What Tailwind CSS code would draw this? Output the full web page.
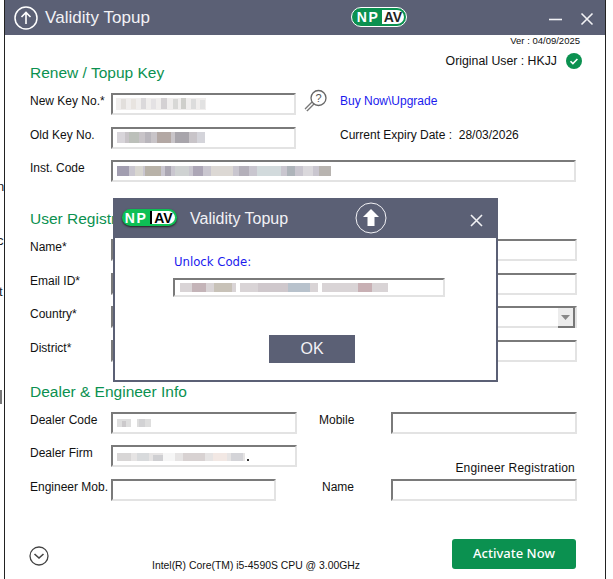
<!DOCTYPE html>
<html>
<head>
<meta charset="utf-8">
<script src="https://cdn.jsdelivr.net/npm/@tailwindcss/browser@4"></script>
<title>Validity Topup</title>
</head>
<body class="bg-white font-['Liberation_Sans',Arial,sans-serif] text-[#111]">
<div class="relative w-[613px] h-[579px] overflow-hidden bg-white">

  <!-- scraps of the window behind -->
  <span class="absolute left-[-3px] top-[180px] text-[13px] text-[#222] leading-none">n</span>
  <span class="absolute left-[-3px] top-[234px] text-[13px] text-[#222] leading-none">c</span>
  <span class="absolute left-[-1px] top-[285px] text-[13px] text-[#222] leading-none">t</span>
  <div class="absolute left-0 top-[390px] w-[2px] h-[14px] bg-[#777]"></div>

  <!-- main window -->
  <div class="absolute left-[4px] top-0 w-[602px] h-[579px] border-x border-[#222] bg-white flex flex-col">
    <header class="h-[35px] shrink-0 bg-[#5b6075] flex items-center pl-[9px] text-white relative">
      <svg class="w-[24px] h-[24px]" viewBox="0 0 24 24" fill="none" stroke="white"><circle cx="12" cy="12" r="11" stroke-width="1.5"/><path d="M12 18V6.500M7.500 11l4.500-4.500 4.500 4.500" stroke-width="1.600"/></svg>
      <span class="ml-[7px] text-[17px] tracking-[0.05px] text-[#f2f2f5]">Validity Topup</span>
      <div class="absolute left-[346px] top-[7px] w-[56px] h-[20px] rounded-full bg-[#0b9150] border border-white p-[2px] flex items-center overflow-hidden text-[14px] font-bold leading-none">
        <span class="w-[28px] text-center text-white tracking-[1.5px]">NP</span>
        <span class="flex-1 h-full bg-white text-[#222] flex items-center justify-center rounded-l-[4px] rounded-r-full">AV</span>
      </div>
      <svg class="absolute left-[543px] top-[11px] w-[48px] h-[16px]" viewBox="0 0 48 16" fill="none" stroke="#f2f2f5" stroke-width="1.600"><path d="M1 8.500h13"/><path d="M33.500 2.500l11 11M44.500 2.500l-11 11"/></svg>
    </header>

    <div class="relative flex-1">
      <p class="absolute right-[25px] top-[0px] text-[9.500px] leading-[12px]">Ver : 04/09/2025</p>
      <div class="absolute right-[23px] top-[17px] flex items-center gap-[9px] text-[12.300px]">
        <span>Original User : HKJJ</span>
        <svg class="w-[16px] h-[16px]" viewBox="0 0 16 16"><circle cx="8" cy="8" r="8" fill="#0b9150"/><path d="M4.500 8.200l2.400 2.400 4.500-4.600" stroke="white" stroke-width="1.600" fill="none"/></svg>
      </div>

      <div class="absolute left-[25px] top-0 right-[25px] bottom-0 flex flex-col">
        <h2 class="mt-[29px] h-[18px] text-[15.500px] leading-[18px] text-[#0b9150]">Renew / Topup Key</h2>

        <div class="mt-[11px] h-[22px] flex">
          <label class="w-[81px] text-[12px] leading-[16px]">New Key No.*</label>
          <div class="w-[185px] h-[22px] border-2 border-[#7a7a7a] border-r-[#e3e3e3] border-b-[#e3e3e3] flex items-center pl-[3px]">
            <svg width="92" height="14"><rect x="0" y="1" width="90" height="12" fill="#f0eeed"/><rect x="5" y="2" width="5" height="10" fill="#e2dfdc"/><rect x="15" y="2" width="5" height="10" fill="#e8e4e0"/><rect x="25" y="1" width="5" height="11" fill="#dbd9db"/><rect x="35" y="2" width="5" height="10" fill="#e4e2e4"/><rect x="45" y="1" width="6" height="11" fill="#d4d1d3"/><rect x="57" y="2" width="5" height="10" fill="#d8d8d6"/><rect x="65" y="1" width="5" height="11" fill="#cfcfcb"/><rect x="75" y="2" width="5" height="10" fill="#dcdcdc"/><rect x="84" y="3" width="5" height="9" fill="#e2e2e2"/></svg>
          </div>
          <svg class="ml-[8px] -mt-[4px] w-[23px] h-[24px]" viewBox="0 0 23 24" fill="none"><path d="M9.500 13.500L2 21" stroke="#777" stroke-width="4"/><path d="M9.500 13.500L2 21" stroke="#fff" stroke-width="1.500"/><circle cx="14.500" cy="9" r="7.500" fill="#fff" stroke="#666" stroke-width="1.300"/><text x="14.500" y="13" font-size="11" text-anchor="middle" fill="#555">?</text></svg>
          <a class="ml-[13px] text-[12px] leading-[16px] text-[#1a1aee]">Buy Now\Upgrade</a>
        </div>

        <div class="mt-[12px] h-[22px] flex">
          <label class="w-[81px] text-[12px] leading-[16px]">Old Key No.</label>
          <div class="w-[185px] h-[22px] border-2 border-[#7a7a7a] border-r-[#e3e3e3] border-b-[#e3e3e3] flex items-center pl-[4px]">
            <svg width="92" height="14"><rect x="0" y="1" width="88" height="11" fill="#c8c4c8"/><rect x="0" y="1" width="8" height="11" fill="#d8d5da"/><rect x="12" y="1" width="10" height="11" fill="#bcc0ba"/><rect x="28" y="1" width="6" height="11" fill="#b9b6bc"/><rect x="40" y="1" width="14" height="11" fill="#b3a8a4"/><rect x="58" y="1" width="14" height="11" fill="#a8a5ab"/><rect x="80" y="1" width="8" height="11" fill="#d4d4da"/></svg>
          </div>
          <span class="ml-[44px] text-[12px] leading-[16px]">Current Expiry Date :&nbsp; 28/03/2026</span>
        </div>

        <div class="mt-[11px] h-[22px] flex">
          <label class="w-[81px] text-[12px] leading-[16px]">Inst. Code</label>
          <div class="w-[465px] h-[22px] border-2 border-[#7a7a7a] border-r-[#e3e3e3] border-b-[#e3e3e3] flex items-center pl-[4px]">
            <svg width="214" height="14"><rect x="0" y="2" width="214" height="10" fill="#c9c6cf"/><rect x="0" y="2" width="12" height="10" fill="#a29eb0"/><rect x="18" y="2" width="8" height="10" fill="#d8d6d0"/><rect x="28" y="2" width="16" height="10" fill="#b8b2a8"/><rect x="48" y="2" width="6" height="10" fill="#aaa6b2"/><rect x="58" y="2" width="14" height="10" fill="#cfd2d2"/><rect x="76" y="2" width="10" height="10" fill="#aca6b6"/><rect x="94" y="2" width="22" height="10" fill="#dcd8d4"/><rect x="122" y="2" width="10" height="10" fill="#b4b0ba"/><rect x="140" y="2" width="24" height="10" fill="#d2dadc"/><rect x="170" y="2" width="8" height="10" fill="#aeb4ba"/><rect x="186" y="2" width="10" height="10" fill="#dad8dc"/><rect x="202" y="2" width="12" height="10" fill="#b8b4b0"/></svg>
          </div>
        </div>

        <h2 class="mt-[28px] h-[18px] text-[15.500px] leading-[18px] text-[#0b9150]">User Registration</h2>

        <div class="mt-[11px] h-[22px] flex">
          <label class="w-[81px] text-[12px] leading-[16px]">Name*</label>
          <div class="w-[466px] h-[22px] border-2 border-[#7a7a7a] border-r-[#e3e3e3] border-b-[#e3e3e3]"></div>
        </div>
        <div class="mt-[12px] h-[22px] flex">
          <label class="w-[81px] text-[12px] leading-[16px]">Email ID*</label>
          <div class="w-[466px] h-[22px] border-2 border-[#7a7a7a] border-r-[#e3e3e3] border-b-[#e3e3e3]"></div>
        </div>
        <div class="mt-[11px] h-[22px] flex">
          <label class="w-[81px] text-[12px] leading-[16px]">Country*</label>
          <div class="w-[466px] h-[22px] border-2 border-[#7a7a7a] border-r-[#e3e3e3] border-b-[#e3e3e3] flex justify-end">
            <div class="w-[17px] h-[20px] bg-[#ececec] border-r-2 border-b-2 border-[#777] flex items-center justify-center"><svg width="9" height="5"><path d="M0 0h9L4.500 5z" fill="#888"/></svg></div>
          </div>
        </div>
        <div class="mt-[12px] h-[22px] flex">
          <label class="w-[81px] text-[12px] leading-[16px]">District*</label>
          <div class="w-[466px] h-[22px] border-2 border-[#7a7a7a] border-r-[#e3e3e3] border-b-[#e3e3e3]"></div>
        </div>

        <h2 class="mt-[21px] h-[18px] text-[15.500px] leading-[18px] text-[#0b9150]">Dealer &amp; Engineer Info</h2>

        <div class="mt-[11px] h-[22px] flex">
          <label class="w-[81px] text-[12px] leading-[16px]">Dealer Code</label>
          <div class="w-[186px] h-[22px] border-2 border-[#7a7a7a] border-r-[#e3e3e3] border-b-[#e3e3e3] flex items-center pl-[4px]">
            <svg width="40" height="14"><rect x="0" y="3" width="34" height="8" fill="#dedede"/><rect x="5" y="5" width="4" height="6" fill="#cbc9cb"/><rect x="14" y="3" width="6" height="8" fill="#fff"/><rect x="22" y="3" width="6" height="8" fill="#d2d2d4"/></svg>
          </div>
          <label class="ml-[22px] w-[72px] text-[12px] leading-[16px]">Mobile</label>
          <div class="w-[186px] h-[22px] border-2 border-[#7a7a7a] border-r-[#e3e3e3] border-b-[#e3e3e3]"></div>
        </div>
        <div class="mt-[11px] h-[22px] flex">
          <label class="w-[81px] text-[12px] leading-[16px]">Dealer Firm</label>
          <div class="w-[186px] h-[22px] border-2 border-[#7a7a7a] border-r-[#e3e3e3] border-b-[#e3e3e3] flex items-center pl-[4px]">
            <svg width="134" height="14"><rect x="0" y="4" width="128" height="8" fill="#e6e4e4"/><rect x="0" y="4" width="14" height="8" fill="#d8d6d6"/><rect x="20" y="4" width="12" height="8" fill="#d8dadc"/><rect x="36" y="6" width="10" height="6" fill="#cfcfd2"/><rect x="46" y="4" width="12" height="8" fill="#f6f6f6"/><rect x="66" y="4" width="22" height="8" fill="#d8d2d2"/><rect x="96" y="4" width="14" height="8" fill="#f2e8e4"/><rect x="114" y="4" width="12" height="8" fill="#d4d4d8"/><rect x="130" y="10" width="2" height="2" fill="#333"/></svg>
          </div>
        </div>
        <div class="mt-[12px] h-[22px] flex">
          <label class="w-[81px] text-[12px] leading-[16px]">Engineer Mob.</label>
          <div class="w-[165px] h-[22px] border-2 border-[#7a7a7a] border-r-[#e3e3e3] border-b-[#e3e3e3]"></div>
          <label class="ml-[46px] w-[69px] text-[12px] leading-[16px]">Name</label>
          <div class="relative w-[186px] h-[22px] border-2 border-[#7a7a7a] border-r-[#e3e3e3] border-b-[#e3e3e3]">
            <span class="absolute right-0 top-[-21px] text-[12px] tracking-[0.2px] leading-[16px] whitespace-nowrap">Engineer Registration</span>
          </div>
        </div>

        <div class="mt-[38px] flex items-start relative">
          <svg class="w-[20px] h-[20px] mt-[7px] -ml-[1px]" viewBox="0 0 20 20" fill="none" stroke="#444" stroke-width="1.300"><circle cx="10" cy="10" r="9"/><path d="M5.500 8l4.500 4 4.500-4" stroke-width="1.600"/></svg>
          <span class="absolute left-[122px] top-[21px] text-[10.400px] leading-[12px] whitespace-nowrap">Intel(R) Core(TM) i5-4590S CPU @ 3.00GHz</span>
          <button class="ml-auto mr-[4px] w-[124px] h-[30px] rounded-[3px] bg-[#0b9150] text-white text-[13px] font-medium font-['Noto_Sans',sans-serif]">Activate Now</button>
        </div>
      </div>
    </div>
  </div>

  <!-- modal -->
  <div class="absolute left-[113px] top-[198px] w-[385px] h-[184px] border-[2px] border-[#5b6075] border-t-0 bg-white flex flex-col">
    <header class="relative -mx-[2px] h-[40px] bg-[#5b6075] text-[#f2f2f5] flex items-center pl-[77px] shrink-0">
      <span class="text-[16px] mt-[1px]">Validity Topup</span>
      <div class="absolute left-[9px] top-[11px] w-[55px] h-[17px] rounded-full bg-[#0ebf55] shadow-[0_1px_2px_#222] flex items-center overflow-hidden text-[14px] font-bold leading-none">
        <span class="w-[28px] text-center text-white tracking-[1.5px]">NP</span>
        <span class="flex-1 h-[13px] mr-[2px] border-l-2 border-black bg-white text-black flex items-center justify-center rounded-r-full">AV</span>
      </div>
      <svg class="absolute left-[242px] top-[4px] w-[32px] h-[32px]" viewBox="0 0 32 32"><circle cx="16" cy="16" r="15" fill="none" stroke="#f2f2f5"/><path d="M16 7l8 8h-4.500v9h-7v-9H8z" fill="white"/></svg>
      <svg class="absolute left-[357px] top-[16px] w-[13px] h-[13px]" viewBox="0 0 13 13" stroke="#f2f2f5" stroke-width="1.600"><path d="M1 1l11 11M12 1L1 12"/></svg>
    </header>
    <div class="flex-1 pl-[58px] pt-[16px] flex flex-col">
      <p class="ml-[1px] font-['DejaVu_Sans',sans-serif] text-[11.700px] leading-[16px] text-[#1a1aee]">Unlock Code:</p>
      <div class="mt-[8px] w-[272px] h-[19px] border-2 border-[#7a7a7a] border-r-[#e3e3e3] border-b-[#e3e3e3] flex items-center pl-[3px]">
        <svg width="212" height="12"><rect x="2" y="1" width="208" height="9" fill="#d9d4d6"/><rect x="14" y="1" width="14" height="9" fill="#c4b4b8"/><rect x="36" y="1" width="18" height="9" fill="#c8c2b8"/><rect x="58" y="1" width="4" height="9" fill="#fff"/><rect x="80" y="1" width="30" height="9" fill="#cfc8cc"/><rect x="110" y="1" width="22" height="9" fill="#b8c2cc"/><rect x="140" y="1" width="4" height="9" fill="#fff"/><rect x="180" y="1" width="14" height="9" fill="#c8b0b4"/></svg>
      </div>
      <button class="mt-[38px] ml-[96px] w-[86px] h-[28px] bg-[#5b6075] text-[#f2f2f5] text-[16px]">OK</button>
    </div>
  </div>
</div>
</body>
</html>
